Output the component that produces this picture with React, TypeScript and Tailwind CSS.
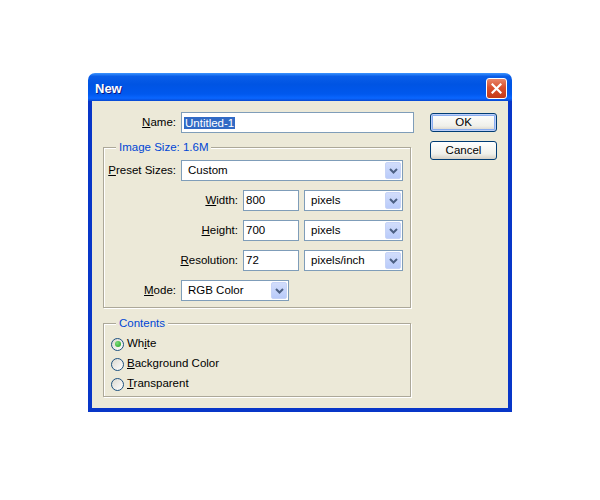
import React from 'react';

const Key = ({ children }: { children: React.ReactNode }) => (
  <span className="underline underline-offset-[1px] decoration-[1px]">{children}</span>
);

const Chevron = () => (
  <svg width="9" height="6" viewBox="0 0 9 6">
    <polyline points="1,1 4.5,4.5 8,1" fill="none" stroke="#4d6185" strokeWidth="2" />
  </svg>
);

const Select = ({ value, width }: { value: string; width: string }) => (
  <div className={`${width} h-[21px] border border-[#7f9db9] bg-white flex items-center`}>
    <span className="flex-1 pl-[6px] truncate">{value}</span>
    <div className="h-[17px] w-[16px] mr-[1px] rounded-[2px] border border-[#c6d3f7] bg-[linear-gradient(to_bottom,#d2ddfb,#b9cbfa)] flex items-center justify-center">
      <Chevron />
    </div>
  </div>
);

const TextBox = ({ value, width }: { value: string; width: string }) => (
  <div className={`${width} h-[21px] border border-[#7f9db9] bg-white flex items-center pl-[2px]`}>
    {value}
  </div>
);

const Radio = ({ checked, children }: { checked?: boolean; children: React.ReactNode }) => (
  <div className="h-[16px] flex items-center gap-[3px]">
    <div className="w-[13px] h-[13px] rounded-full border border-[#1c5180] bg-[linear-gradient(135deg,#dcd9d0,#ffffff)] flex items-center justify-center">
      {checked && <div className="w-[6px] h-[6px] rounded-full bg-[radial-gradient(circle_at_35%_35%,#7ddc7d,#21a121)]" />}
    </div>
    <span>{children}</span>
  </div>
);

const Button = ({ children, primary }: { children: React.ReactNode; primary?: boolean }) => (
  <button
    className={`w-[67px] h-[19px] rounded-[3px] border border-[#003c74] bg-[linear-gradient(to_bottom,#ffffff,#f0f0ea_70%,#d6d0c5)] text-black flex items-center justify-center ${
      primary ? 'shadow-[inset_0_0_0_1px_#bccef8,inset_0_0_0_2px_#89adf0]' : ''
    }`}
  >
    {children}
  </button>
);

const GroupBox = ({ title, className, children }: { title: string; className: string; children: React.ReactNode }) => (
  <div className={`relative w-[308px] border border-[#aca899] shadow-[1px_1px_0_#ffffff,inset_1px_1px_0_#ffffff] ${className}`}>
    <span className="absolute -top-[8px] left-[12px] px-[3px] leading-[14px] bg-[#ece9d8] text-[#0046d5]">{title}</span>
    {children}
  </div>
);

export default function App() {
  return (
    <div className="w-[600px] h-[500px] bg-white pt-[73px] pl-[88px] font-['Liberation_Sans',Arial,sans-serif] text-[11.5px] text-black">
      <div className="w-[424px] flex flex-col">
        {/* title bar */}
        <div className="h-[28px] rounded-t-[7px] bg-[linear-gradient(to_bottom,#3d95ff_0%,#0a5ee8_12%,#0054e3_40%,#0058ee_75%,#0a66ff_90%,#0848d0_100%)] flex items-start justify-between pl-[7px] pr-[5px]">
          <span className="mt-[8px] text-[13px] leading-[15px] font-bold text-white [text-shadow:1px_1px_0_#0a1883]">New</span>
          <div className="mt-[5px] w-[21px] h-[21px] rounded-[3px] border border-white bg-[linear-gradient(to_bottom,#e8866a,#d9502e_45%,#c43a18)] flex items-center justify-center">
            <svg width="11" height="11" viewBox="0 0 11 11">
              <path d="M1.5 1.5 L9.5 9.5 M9.5 1.5 L1.5 9.5" stroke="#ffffff" strokeWidth="2.2" strokeLinecap="square" />
            </svg>
          </div>
        </div>

        {/* body */}
        <div className="border-x-[4px] border-b-[4px] border-[#0836c8] bg-[#ece9d8] flex pt-[11px] pl-[11px] pr-[11px] pb-[11px] gap-[16px]">
          <div className="w-[311px] flex flex-col">
            <div className="h-[21px] flex items-center gap-[5px]">
              <span className="w-[73px] text-right"><Key>N</Key>ame:</span>
              <div className="w-[233px] h-[21px] border border-[#7f9db9] bg-white flex items-center pl-[2px]">
                <span className="bg-[#316ac5] text-white leading-[12px] px-[1px]">Untitled-1</span>
              </div>
            </div>

            <GroupBox title="Image Size: 1.6M" className="mt-[14px] pt-[12px] pb-[6px]">
              <div className="flex flex-col gap-[9px]">
                <div className="flex items-center gap-[5px]">
                  <span className="w-[72px] text-right whitespace-nowrap"><Key>P</Key>reset Sizes:</span>
                  <Select value="Custom" width="w-[222px]" />
                </div>
                <div className="flex items-center gap-[5px]">
                  <span className="w-[134px] text-right"><Key>W</Key>idth:</span>
                  <TextBox value="800" width="w-[56px]" />
                  <Select value="pixels" width="w-[99px]" />
                </div>
                <div className="flex items-center gap-[5px]">
                  <span className="w-[134px] text-right"><Key>H</Key>eight:</span>
                  <TextBox value="700" width="w-[56px]" />
                  <Select value="pixels" width="w-[99px]" />
                </div>
                <div className="flex items-center gap-[5px]">
                  <span className="w-[134px] text-right"><Key>R</Key>esolution:</span>
                  <TextBox value="72" width="w-[56px]" />
                  <Select value="pixels/inch" width="w-[99px]" />
                </div>
                <div className="flex items-center gap-[5px]">
                  <span className="w-[72px] text-right"><Key>M</Key>ode:</span>
                  <Select value="RGB Color" width="w-[108px]" />
                </div>
              </div>
            </GroupBox>

            <GroupBox title="Contents" className="mt-[15px] pt-[12px] pb-[4px] pl-[7px]">
              <div className="flex flex-col gap-[4px]">
                <Radio checked>Wh<Key>i</Key>te</Radio>
                <Radio><Key>B</Key>ackground Color</Radio>
                <Radio><Key>T</Key>ransparent</Radio>
              </div>
            </GroupBox>
          </div>

          <div className="flex flex-col gap-[9px] mt-[1px]">
            <Button primary>OK</Button>
            <Button>Cancel</Button>
          </div>
        </div>
      </div>
    </div>
  );
}
